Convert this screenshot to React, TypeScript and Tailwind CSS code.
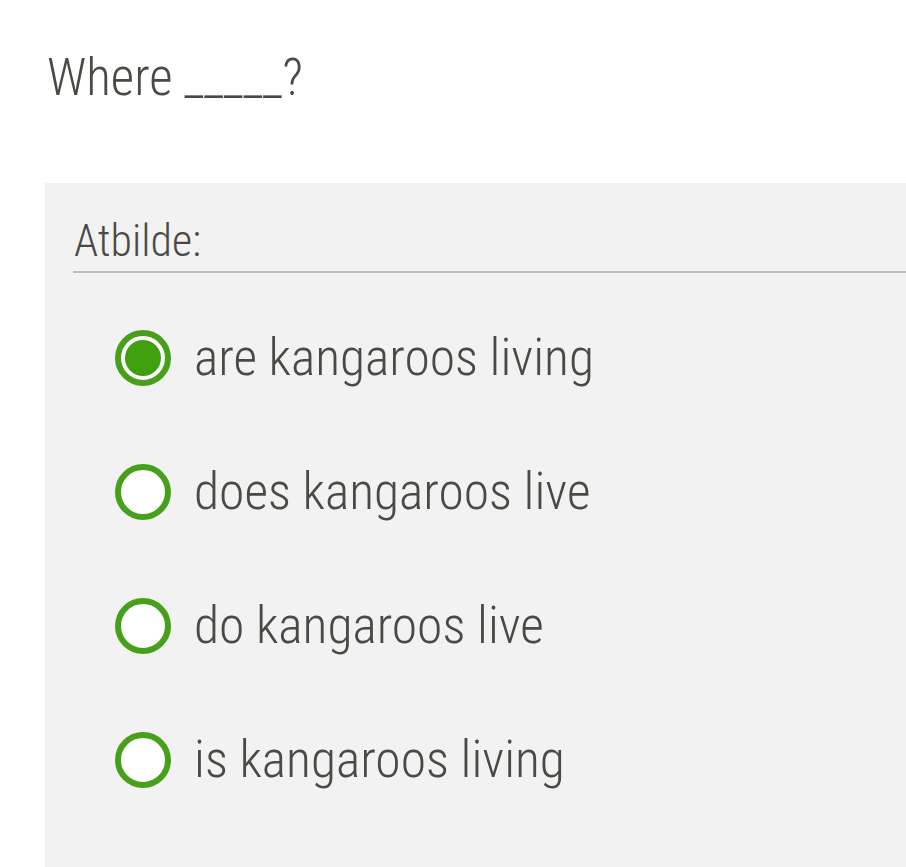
import { useState } from 'react';

const options = [
    'are kangaroos living',
    'does kangaroos live',
    'do kangaroos live',
    'is kangaroos living',
];

function Radio({ checked }: { checked: boolean }) {
    return (
        <span className="w-[56px] h-[56px] flex-shrink-0 rounded-full border-[6px] border-[#46a01a] bg-white flex items-center justify-center">
            {checked && <span className="w-[36px] h-[36px] rounded-full bg-[#3f9f0c]" />}
        </span>
    );
}

export default function App() {
    const [selected, setSelected] = useState(0);

    return (
        <div className="min-h-[867px] bg-white flex flex-col text-[#4a4a45] font-['Roboto_Condensed','Roboto',sans-serif] [font-stretch:75%] font-light">
            {/* Question */}
            <div className="pl-[47px] pt-[48px] text-[51px] leading-[60px]">
                Where _____?
            </div>

            {/* Answer panel */}
            <div className="flex-1 ml-[45px] mt-[75px] bg-[#f2f2f2] pl-[28px] pt-[31px]">
                <div className="text-[44px] leading-[54px] pl-[1px] pb-[3px] border-b-2 border-[#bdbdbd]">
                    Atbilde:
                </div>

                <div className="flex flex-col pl-[42px] pt-[57px] gap-[78px]">
                    {options.map((opt, i) => (
                        <label
                            key={opt}
                            onClick={() => setSelected(i)}
                            className="flex items-center gap-[23px] cursor-pointer h-[56px]"
                        >
                            <Radio checked={selected === i} />
                            <span className="text-[51.5px] leading-[56px]">{opt}</span>
                        </label>
                    ))}
                </div>
            </div>
        </div>
    );
}
